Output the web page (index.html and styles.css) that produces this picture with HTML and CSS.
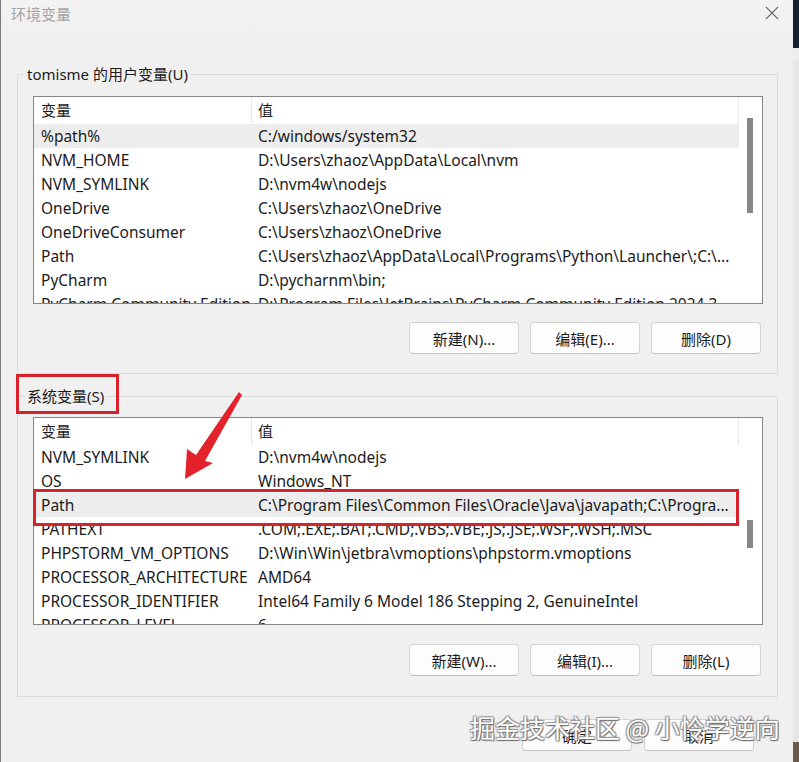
FILE: index.html
```html
<!DOCTYPE html>
<html lang="zh-CN">
<head>
<meta charset="utf-8">
<title>环境变量</title>
<link rel="stylesheet" href="styles.css">
</head>
<body>
<div class="screen">
  <div class="dialog">
    <div class="titlebar">
      <span class="title">环境变量</span>
      <svg class="close" width="14" height="14" viewBox="0 0 14 14"><path d="M1 1 L13 13 M13 1 L1 13" stroke="#6a6a6a" stroke-width="1.1" fill="none"/></svg>
    </div>

    <fieldset class="group group-user">
      <legend>tomisme 的用户变量(U)</legend>
      <div class="list">
        <div class="list-main">
          <div class="list-head"><span class="c1">变量</span><span class="c2">值</span></div>
          <div class="row sel"><span class="c1">%path%</span><span class="c2">C:/windows/system32</span></div>
          <div class="row"><span class="c1">NVM_HOME</span><span class="c2">D:\Users\zhaoz\AppData\Local\nvm</span></div>
          <div class="row"><span class="c1">NVM_SYMLINK</span><span class="c2">D:\nvm4w\nodejs</span></div>
          <div class="row"><span class="c1">OneDrive</span><span class="c2">C:\Users\zhaoz\OneDrive</span></div>
          <div class="row"><span class="c1">OneDriveConsumer</span><span class="c2">C:\Users\zhaoz\OneDrive</span></div>
          <div class="row"><span class="c1">Path</span><span class="c2">C:\Users\zhaoz\AppData\Local\Programs\Python\Launcher\;C:\...</span></div>
          <div class="row"><span class="c1">PyCharm</span><span class="c2">D:\pycharnm\bin;</span></div>
          <div class="row"><span class="c1">PyCharm Community Edition</span><span class="c2">D:\Program Files\JetBrains\PyCharm Community Edition 2024.3...</span></div>
        </div>
        <div class="vscroll"><div class="thumb thumb-user"></div></div>
      </div>
      <div class="btns">
        <button class="btn">新建(N)...</button>
        <button class="btn">编辑(E)...</button>
        <button class="btn">删除(D)</button>
      </div>
    </fieldset>

    <fieldset class="group group-sys">
      <legend>系统变量(S)</legend>
      <div class="list">
        <div class="list-main">
          <div class="list-head"><span class="c1">变量</span><span class="c2">值</span></div>
          <div class="row"><span class="c1">NVM_SYMLINK</span><span class="c2">D:\nvm4w\nodejs</span></div>
          <div class="row"><span class="c1">OS</span><span class="c2">Windows_NT</span></div>
          <div class="row sel"><span class="c1">Path</span><span class="c2">C:\Program Files\Common Files\Oracle\Java\javapath;C:\Progra...</span></div>
          <div class="row"><span class="c1">PATHEXT</span><span class="c2">.COM;.EXE;.BAT;.CMD;.VBS;.VBE;.JS;.JSE;.WSF;.WSH;.MSC</span></div>
          <div class="row"><span class="c1">PHPSTORM_VM_OPTIONS</span><span class="c2">D:\Win\Win\jetbra\vmoptions\phpstorm.vmoptions</span></div>
          <div class="row"><span class="c1">PROCESSOR_ARCHITECTURE</span><span class="c2">AMD64</span></div>
          <div class="row"><span class="c1">PROCESSOR_IDENTIFIER</span><span class="c2">Intel64 Family 6 Model 186 Stepping 2, GenuineIntel</span></div>
          <div class="row"><span class="c1">PROCESSOR_LEVEL</span><span class="c2">6</span></div>
        </div>
        <div class="vscroll"><div class="thumb thumb-sys"></div></div>
      </div>
      <div class="btns">
        <button class="btn">新建(W)...</button>
        <button class="btn">编辑(I)...</button>
        <button class="btn">删除(L)</button>
      </div>
    </fieldset>

    <div class="footer">
      <button class="btn">确定</button>
      <button class="btn">取消</button>
    </div>
  </div>
  <div class="desk">
    <div class="desk-top"></div>
    <div class="desk-mid"></div>
    <div class="desk-bottom"></div>
  </div>

  <div class="mark mark-label"></div>
  <div class="mark mark-row"></div>
  <svg class="arrow" width="100" height="100" viewBox="150 385 100 100">
    <polygon points="239,392 242,395 205,461 213,463 185,479 187,449 196,455" fill="#e3222b"/>
  </svg>
  <div class="watermark">掘金技术社区 @ 小怜学逆向</div>
</div>
</body>
</html>
```

FILE: styles.css
```css
* { box-sizing: border-box; }

html, body {
  margin: 0;
  padding: 0;
  width: 799px;
  height: 762px;
  overflow: hidden;
  background: #f0f0f0;
}

body {
  font-family: "Noto Sans", "Noto Sans CJK SC", sans-serif;
  font-size: 15px;
  color: #1b1b1b;
}

.screen {
  position: relative;
  display: flex;
  width: 799px;
  height: 762px;
}

.dialog {
  width: 793px;
  height: 762px;
  background: #f0f0f0;
  border-left: 1px solid #7c7c7c;
  display: flex;
  flex-direction: column;
  padding-left: 16px;
  padding-right: 15px;
}

.titlebar {
  height: 30px;
  margin-left: -16px;
  margin-right: -15px;
  padding: 0 14px 0 10px;
  display: flex;
  align-items: center;
  justify-content: space-between;
  background: linear-gradient(#f3f3f3, #f0f0f0);
}

.title {
  font-family: "Noto Sans CJK SC", sans-serif;
  color: #a3a3a3;
  font-size: 15px;
  line-height: 20px;
  margin-top: -2px;
}

.close { margin-top: -4px; }

.group {
  margin: 0;
  border: 1px solid #dcdcdc;
  padding: 12px 14px 19px 15px;
  min-width: 0;
}

.group-user { margin-top: 34px; }
.group-sys { margin-top: 12px; padding-top: 11px; padding-bottom: 20px; }

.group legend {
  font-family: "Noto Sans", "Noto Sans CJK SC", sans-serif;
  font-size: 15px;
  line-height: 20px;
  padding: 0 2px;
  margin-left: -8px;
  color: #1b1b1b;
}

.list {
  display: flex;
  height: 208px;
  border: 1px solid #858585;
  background: #ffffff;
  overflow: hidden;
}

.list-main {
  width: 705px;
  overflow: hidden;
}

.list-head {
  display: grid;
  grid-template-columns: 217px 1fr;
  height: 27px;
  align-items: stretch;
  border-right: 1px solid #e8e8e8;
}

.list-head span {
  display: flex;
  align-items: center;
  font-family: "Noto Sans CJK SC", sans-serif;
  padding-bottom: 2px;
}

.list-head .c1 { padding-left: 7px; }
.list-head .c2 { padding-left: 6px; border-left: 1px solid #e8e8e8; }

.row {
  display: grid;
  grid-template-columns: 217px 1fr;
  height: 24px;
  line-height: 24px;
  font-size: 15.5px;
  white-space: nowrap;
}

.row span { overflow: hidden; }
.row .c1 { padding-left: 7px; }
.row .c2 { padding-left: 7px; }
.row.sel { background: #ededed; }

.vscroll {
  flex: 1;
  background: #ffffff;
}

.thumb {
  width: 6px;
  margin-left: 8px;
  background: #878787;
}

.thumb-user { margin-top: 21px; height: 95px; }
.thumb-sys { margin-top: 102px; height: 28px; }

.btns {
  display: flex;
  justify-content: flex-end;
  gap: 11px;
  margin-top: 19px;
  padding-right: 2px;
}

.group-user .btns { margin-top: 18px; }

.btn {
  width: 110px;
  height: 32px;
  font-family: "Noto Sans", "Noto Sans CJK SC", sans-serif;
  font-size: 15px;
  color: #1b1b1b;
  background: #fdfdfd;
  border: 1px solid #d3d3d3;
  border-bottom-color: #c2c2c2;
  border-radius: 4px;
  padding: 0;
}

.footer {
  display: flex;
  justify-content: flex-end;
  gap: 12px;
  margin-top: 22px;
  margin-right: 24px;
}

.desk {
  flex: 1;
  display: flex;
  flex-direction: column;
}

.desk-top { height: 48px; background: #16202e; }
.desk-mid { flex: 1; background: #e7e7e7; border-top: 12px solid #eeeeee; }
.desk-bottom { height: 20px; background: #6b5a4c; }

.mark {
  position: absolute;
  border: 3px solid #d8232c;
}

.mark-label { left: 16px; top: 374px; width: 103px; height: 40px; }
.mark-row { left: 33px; top: 489px; width: 706px; height: 37px; }

.arrow {
  position: absolute;
  left: 150px;
  top: 385px;
}

.watermark {
  position: absolute;
  left: 470px;
  top: 711px;
  font-family: "Noto Sans CJK SC", sans-serif;
  font-size: 25px;
  line-height: 32px;
  color: #ffffff;
  white-space: nowrap;
  text-shadow: 1px 1px 1px #6a6a6a, -1px -1px 1px #9a9a9a, 1px -1px 1px #9a9a9a, -1px 1px 1px #9a9a9a;
}
```
